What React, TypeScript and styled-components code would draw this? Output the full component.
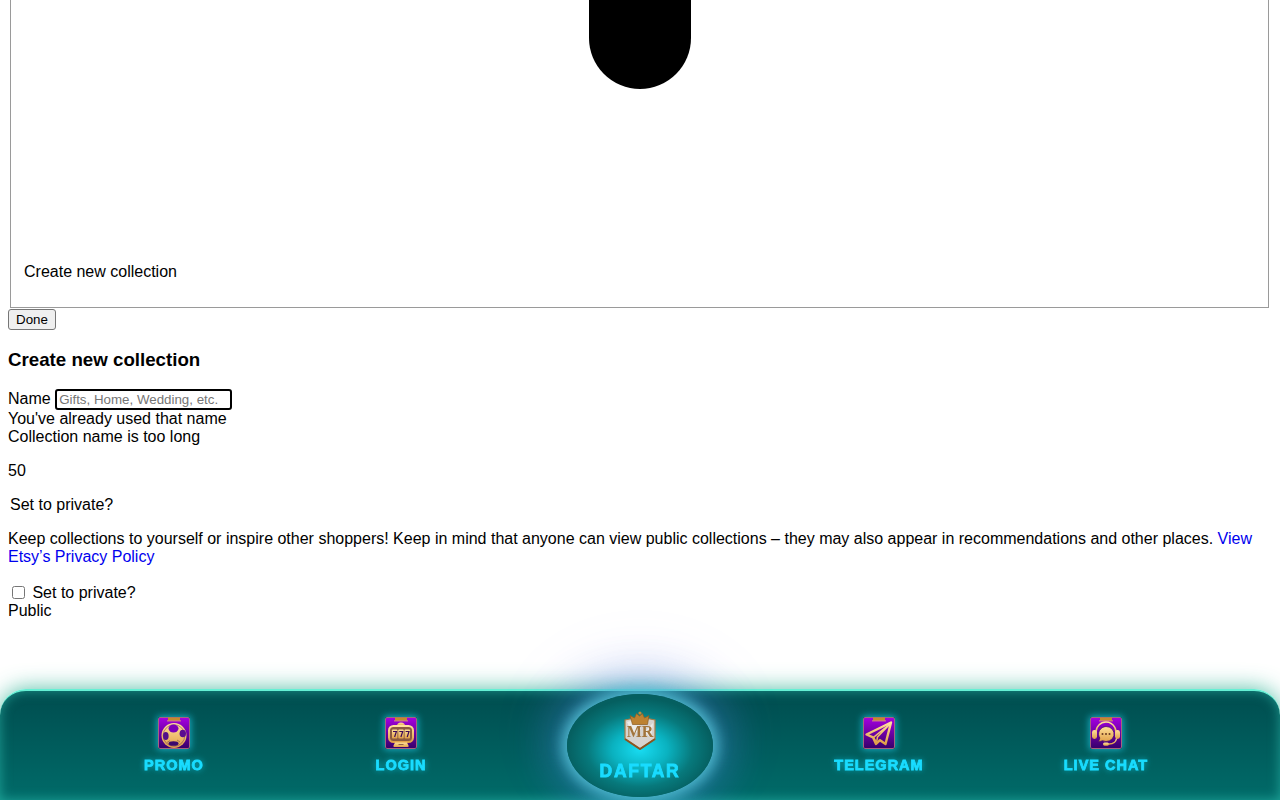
import React from "react";
import styled, { createGlobalStyle } from "styled-components";

const Global = createGlobalStyle`
  html, body { margin: 0; padding: 0; background: #fff; }
  body { margin: 0 8px; font-family: "Liberation Sans", Arial, sans-serif; font-size: 16px; color: #000; overflow: hidden; }
`;

const Frame = styled.div`
  margin: 0 3px 1px 2px;
  height: 307px;
  border: 1px solid #9a9a9a;
  border-top: none;
  display: flex;
  flex-direction: column;
  align-items: center;
  justify-content: space-between;
`;
const Pill = styled.div`
  width: 102px;
  height: 89px;
  background: #000;
  border-radius: 0 0 51px 51px;
`;
const FrameLabel = styled.div`
  align-self: stretch;
  padding: 0 0 26px 13px;
  line-height: 18px;
`;
const DoneButton = styled.button`
  display: block;
  width: 48px;
  height: 21px;
  padding: 0;
  border: 1px solid #767676;
  border-radius: 3px;
  background: #efefef;
  font: 13.33px "Liberation Sans", Arial, sans-serif;
  color: #000;
`;
const Title = styled.h3`
  margin: 18.72px 0 19.72px;
  font-size: 18.72px;
  line-height: 21px;
  font-weight: 700;
`;
const NameRow = styled.div`
  line-height: 18px;
  height: 21px;
`;
const NameInput = styled.input`
  box-sizing: border-box;
  width: 177px;
  height: 21px;
  padding: 1px 2px;
  border: 2px solid #000;
  border-radius: 3px;
  font: 13.33px "Liberation Sans", Arial, sans-serif;
  &::placeholder { color: #757575; }
`;
const Line = styled.div`
  line-height: 18px;
`;
const Para = styled.p<{ $indent?: boolean }>`
  margin: 16px 0;
  line-height: 18px;
  padding-left: ${(p) => (p.$indent ? "2px" : "0")};
`;
const Link = styled.a`
  color: #0000ee;
  text-decoration: none;
`;
const CheckRow = styled.label`
  display: block;
  margin-top: 18px;
  line-height: 18px;
  height: 18px;
`;
const Check = styled.input`
  margin: 1px 3px 5px 4px;
  width: 13px;
  height: 13px;
  vertical-align: -1px;
`;

const Bar = styled.nav`
  position: fixed;
  left: 0;
  right: 0;
  bottom: 0;
  height: 109px;
  box-sizing: content-box;
  border-top: 2px solid #66f0d4;
  border-radius: 26px 26px 0 0;
  background: linear-gradient(180deg, #004d4f 0%, #006b69 100%);
  box-shadow: 0 0 22px rgba(40, 175, 145, 0.8), inset 0 0 12px rgba(60, 220, 200, 0.5);
  display: grid;
  grid-template-columns: repeat(2, 227px) 251px repeat(2, 227px);
  justify-content: center;
`;
const Item = styled.a`
  display: flex;
  flex-direction: column;
  align-items: center;
  padding-top: 26px;
  gap: 9px;
`;
const CenterSlot = styled.div`
  display: flex;
  justify-content: center;
  padding-top: 3px;
`;
const CenterOrb = styled.a`
  width: 146px;
  height: 103px;
  box-sizing: border-box;
  border-radius: 50%;
  padding-top: 17px;
  display: flex;
  flex-direction: column;
  align-items: center;
  gap: 13px;
  background: radial-gradient(ellipse 50% 50% at 50% 54%, #18dcf2 0%, #0ab2c0 38%, #07797c 72%, #055f60 100%);
  box-shadow: 0 0 14px 5px rgba(85, 195, 215, 0.9), 0 0 40px 16px rgba(55, 125, 200, 0.45), 0 -14px 56px 24px rgba(150, 130, 255, 0.1);
`;
const Label = styled.span<{ $big?: boolean }>`
  font-family: "Liberation Sans", Arial, sans-serif;
  font-weight: 700;
  font-size: ${(p) => (p.$big ? "17.5px" : "14.5px")};
  line-height: ${(p) => (p.$big ? "17px" : "14px")};
  letter-spacing: ${(p) => (p.$big ? "1.7px" : "1px")};
  color: #19dcff;
  -webkit-text-stroke: 0.8px #19dcff;
  text-shadow: ${(p) => (p.$big ? "none" : "0 0 6px rgba(25, 220, 255, 0.8)")};
  white-space: nowrap;
`;
const TileSvg = styled.svg`
  display: block;
  width: 32px;
  height: 32px;
  border-radius: 2px;
  box-shadow: 0 0 7px 1px rgba(30, 205, 235, 0.7);
`;
const LogoSvg = styled.svg`
  display: block;
  width: 34px;
  height: 39px;
`;

const Tile = ({ id, children }: { id: string; children: React.ReactNode }) => (
  <TileSvg viewBox="0 0 32 32">
    <defs>
      <linearGradient id={`bg-${id}`} x1="0" y1="0" x2="0" y2="1">
        <stop offset="0" stopColor="#a500e0" />
        <stop offset="1" stopColor="#36006a" />
      </linearGradient>
      <linearGradient id={`au-${id}`} x1="0" y1="0" x2="0" y2="1">
        <stop offset="0" stopColor="#ffe09a" />
        <stop offset="1" stopColor="#e0a048" />
      </linearGradient>
    </defs>
    <rect x="0.5" y="0.5" width="31" height="31" rx="1.5" fill={`url(#bg-${id})`} stroke="#a5637f" />
    <rect x="10" y="0.5" width="12" height="3" fill="#c48a2e" />
    <rect x="9" y="3.5" width="14" height="0.8" fill="#e8b860" />
    {children}
  </TileSvg>
);

const PromoIcon = () => (
  <Tile id="promo">
    <circle cx="16" cy="18.5" r="12.5" fill="url(#au-promo)" />
    <circle cx="16" cy="18.5" r="10.8" fill="none" stroke="#6a2a60" strokeWidth="0.5" />
    <ellipse cx="15.5" cy="11.5" rx="5" ry="4" fill="#7a00b8" />
    <ellipse cx="7.8" cy="19" rx="2.8" ry="4" fill="#52108a" />
    <ellipse cx="24.8" cy="16.5" rx="3.2" ry="3.8" fill="#5a0c90" />
    <ellipse cx="15.5" cy="26.5" rx="5" ry="2.3" fill="#3c0a6e" />
    <path d="M9 25.5l3-2M22 25l-3-2" stroke="#7a4a50" strokeWidth="0.6" />
  </Tile>
);
const LoginIcon = () => (
  <Tile id="login">
    <path d="M12 9a4 3.5 0 0 1 8 0z" fill="url(#au-login)" />
    <rect x="4" y="9" width="24" height="16" rx="4.5" fill="#8a5a40" stroke="url(#au-login)" strokeWidth="2" />
    <rect x="7" y="12.5" width="5.4" height="9" rx="0.8" fill="url(#au-login)" />
    <rect x="13.3" y="12.5" width="5.4" height="9" rx="0.8" fill="url(#au-login)" />
    <rect x="19.6" y="12.5" width="5.4" height="9" rx="0.8" fill="url(#au-login)" />
    <path d="M8 14.5h3.4l-1.8 5.5M14.3 14.5h3.4l-1.8 5.5M20.6 14.5H24l-1.8 5.5" fill="none" stroke="#3c0a55" strokeWidth="1.2" />
    <path d="M10 25.5h12l1.5 3c.3 1-.3 1.5-1 1.5h-13c-.7 0-1.3-.5-1-1.5z" fill="url(#au-login)" />
    <rect x="13.5" y="27" width="5" height="0.8" fill="#7a4a40" />
  </Tile>
);
const TelegramIcon = () => (
  <Tile id="tele">
    <path d="M28 5.5L3.5 17.5l6.5 2.8 3 6.7 4-3.8 5.5 3.8z" fill="none" stroke="url(#au-tele)" strokeWidth="2.4" strokeLinejoin="round" />
    <path d="M27 7L10.5 20.3l3 5.5 1-5.8z" fill="none" stroke="url(#au-tele)" strokeWidth="1.5" strokeLinejoin="round" />
  </Tile>
);
const ChatIcon = () => (
  <Tile id="chat">
    <path d="M6 18v-3a10 10 0 0 1 20 0v3" fill="none" stroke="url(#au-chat)" strokeWidth="1.5" />
    <rect x="2" y="13" width="5" height="9" rx="2.4" fill="url(#au-chat)" />
    <rect x="25" y="13" width="5" height="9" rx="2.4" fill="url(#au-chat)" />
    <path d="M16 9.5a8 7.5 0 1 1-3.5 14.2L8.5 25l1.3-4A8 7.5 0 0 1 16 9.5z" fill="url(#au-chat)" stroke="#4a0a70" strokeWidth="0.8" />
    <circle cx="12.5" cy="17" r="1" fill="#6a3a20" />
    <circle cx="16" cy="17" r="1" fill="#6a3a20" />
    <circle cx="19.5" cy="17" r="1" fill="#6a3a20" />
    <path d="M26.5 21.5c-.5 3.5-3.5 5.5-8 5.5" fill="none" stroke="url(#au-chat)" strokeWidth="1.4" />
    <rect x="13" y="25.5" width="6" height="3.2" rx="1.6" fill="url(#au-chat)" />
  </Tile>
);
const BrandLogo = () => (
  <LogoSvg viewBox="0 0 34 39">
    <path d="M2 9l15-3 15 3v19L17 38 2 28z" fill="#d6d3cf" stroke="#a87a44" strokeWidth="1.2" />
    <path d="M4 11l10-3 4 10-8 6zM30 12l-9 9 7 6z" fill="#ecebe8" />
    <path d="M2 28l15 10 15-10" fill="none" stroke="#8a5520" strokeWidth="2" />
    <path d="M7 4.5l4.5 2.5 2-4.5 3 2.500 3-2.500 2 4.500L26 4.500l-1.500 9h-15z" fill="#bd8232" stroke="#8a5a20" strokeWidth="0.7" />
    <circle cx="17" cy="2" r="1.6" fill="#c08a3a" />
    <text x="17" y="26" textAnchor="middle" fontFamily="Liberation Serif, serif" fontWeight="700" fontSize="16" fill="#a2753c">MR</text>
  </LogoSvg>
);

export default function App() {
  return (
    <>
      <Global />
      <Frame>
        <Pill />
        <FrameLabel>Create new collection</FrameLabel>
      </Frame>
      <DoneButton>Done</DoneButton>
      <Title>Create new collection</Title>
      <NameRow>
        Name <NameInput placeholder="Gifts, Home, Wedding, etc." />
      </NameRow>
      <Line>You've already used that name</Line>
      <Line>Collection name is too long</Line>
      <Para>50</Para>
      <Para $indent>Set to private?</Para>
      <Para>
        Keep collections to yourself or inspire other shoppers! Keep in mind that anyone can view public collections – they may also appear in recommendations and other places. <Link href="#">View Etsy’s Privacy Policy</Link>
      </Para>
      <CheckRow>
        <Check type="checkbox" /> Set to private?
      </CheckRow>
      <Line>Public</Line>

      <Bar>
        <Item>
          <PromoIcon />
          <Label>PROMO</Label>
        </Item>
        <Item>
          <LoginIcon />
          <Label>LOGIN</Label>
        </Item>
        <CenterSlot>
          <CenterOrb>
            <BrandLogo />
            <Label $big>DAFTAR</Label>
          </CenterOrb>
        </CenterSlot>
        <Item>
          <TelegramIcon />
          <Label>TELEGRAM</Label>
        </Item>
        <Item>
          <ChatIcon />
          <Label>LIVE CHAT</Label>
        </Item>
      </Bar>
    </>
  );
}
